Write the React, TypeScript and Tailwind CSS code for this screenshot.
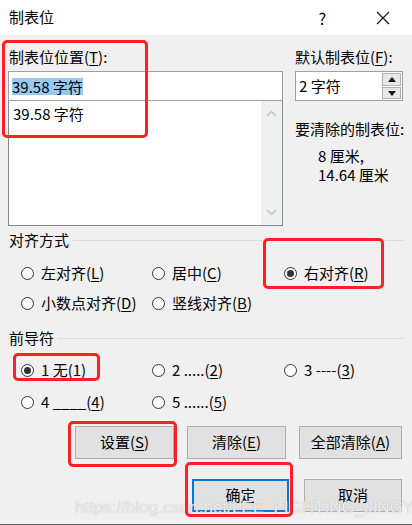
import React from "react";

const FONT = { fontFamily: '"Noto Sans CJK SC", "Noto Sans", sans-serif' };

function U({ children }: { children: React.ReactNode }) {
  return <span className="underline underline-offset-2">{children}</span>;
}

function Radio({ checked, children }: { checked?: boolean; children: React.ReactNode }) {
  return (
    <div className="flex items-center">
      <span className="flex h-[13px] w-[13px] items-center justify-center rounded-full border border-[#333] bg-white">
        {checked && <span className="h-[7px] w-[7px] rounded-full bg-[#333]" />}
      </span>
      <span className="ml-[7px] whitespace-nowrap">{children}</span>
    </div>
  );
}

function Btn({ w, focus, children }: { w: string; focus?: boolean; children: React.ReactNode }) {
  return (
    <div
      className={`flex h-[33px] items-center justify-center bg-[#e1e1e1] ${w} ${
        focus ? "border-2 border-[#0078d7]" : "border border-[#adadad]"
      }`}
    >
      {children}
    </div>
  );
}

function Section({ label, line }: { label: string; line: string }) {
  return (
    <div className="flex h-[20px] items-center pl-[9px] pr-[8px] leading-[20px]">
      <span>{label}</span>
      <div className={`h-px flex-1 bg-[#dcdcdc] ${line}`} />
    </div>
  );
}

export default function App() {
  return (
    <div
      className="relative flex h-[525px] w-[412px] flex-col overflow-hidden bg-[#f0f0f0] text-[15px] text-[#000]"
      style={FONT}
    >
      {/* title bar */}
      <div className="flex h-[35px] shrink-0 items-center bg-white pl-[9px]">
        <span className="flex-1">制表位</span>
        <span className="mr-[50px] text-[16px]">?</span>
        <svg width="14" height="14" viewBox="0 0 14 14" className="mr-[22px]">
          <path d="M1 1L13 13M13 1L1 13" stroke="#111" strokeWidth="1.1" />
        </svg>
      </div>

      {/* top area */}
      <div className="flex pt-[12px]">
        <div className="ml-[8px] w-[275px]">
          <div className="h-[20px] pl-[1px] leading-[20px]">
            制表位位置(<U>T</U>):
          </div>
          <div className="mt-[4px] flex h-[30px] items-center border border-[#a0a0a0] bg-white pl-[3px]">
            <span className="bg-[#99c9ef] leading-[17px]">39.58 字符</span>
          </div>
          <div className="flex h-[125px] border border-t-0 border-[#828790] bg-white">
            <div className="flex-1 pl-[4px] pt-[3px] leading-[20px]">39.58 字符</div>
            <div className="flex w-[21px] flex-col items-center justify-between bg-[#f0f0f0] py-[9px]">
              <svg width="11" height="7" viewBox="0 0 11 7">
                <path d="M1 6L5.5 1.5L10 6" fill="none" stroke="#c4c4c4" strokeWidth="1.5" />
              </svg>
              <svg width="11" height="7" viewBox="0 0 11 7">
                <path d="M1 1L5.5 5.5L10 1" fill="none" stroke="#c4c4c4" strokeWidth="1.5" />
              </svg>
            </div>
          </div>
        </div>

        <div className="ml-[12px] w-[108px]">
          <div className="h-[20px] leading-[20px]">
            默认制表位(<U>F</U>):
          </div>
          <div className="mt-[4px] flex h-[30px] items-center border border-[#a0a0a0] bg-white pl-[3px]">
            <span className="flex-1">2 字符</span>
            <div className="mr-[1px] flex flex-col gap-[1px]">
              <div className="flex h-[13px] w-[19px] items-center justify-center border border-[#b0b0b0] bg-[#e8e8e8]">
                <svg width="8" height="5" viewBox="0 0 8 5">
                  <path d="M0 5L4 0L8 5Z" fill="#111" />
                </svg>
              </div>
              <div className="flex h-[12px] w-[19px] items-center justify-center border border-[#b0b0b0] bg-[#e8e8e8]">
                <svg width="8" height="5" viewBox="0 0 8 5">
                  <path d="M0 0L4 5L8 0Z" fill="#111" />
                </svg>
              </div>
            </div>
          </div>
          <div className="mt-[18px] h-[20px] whitespace-nowrap leading-[20px]">要清除的制表位:</div>
          <div className="mt-[7px] pl-[23px] leading-[19px]">
            <div>8 厘米,</div>
            <div>14.64 厘米</div>
          </div>
        </div>
      </div>

      {/* alignment */}
      <div className="mt-[4px]">
        <Section label="对齐方式" line="ml-[4px]" />
      </div>
      <div className="mt-[8px] grid grid-cols-[131px_132px_1fr] pl-[21px]">
        <div className="flex h-[30px] items-center">
          <Radio>
            左对齐(<U>L</U>)
          </Radio>
        </div>
        <div className="flex h-[30px] items-center">
          <Radio>
            居中(<U>C</U>)
          </Radio>
        </div>
        <div className="flex h-[30px] items-center">
          <Radio checked>
            右对齐(<U>R</U>)
          </Radio>
        </div>
        <div className="flex h-[30px] items-center">
          <Radio>
            小数点对齐(<U>D</U>)
          </Radio>
        </div>
        <div className="flex h-[30px] items-center">
          <Radio>
            竖线对齐(<U>B</U>)
          </Radio>
        </div>
      </div>

      {/* leader */}
      <div className="mt-[10px]">
        <Section label="前导符" line="ml-[4px]" />
      </div>
      <div className="mt-[6px] grid grid-cols-[131px_132px_1fr] pl-[21px]">
        <div className="flex h-[32px] items-center">
          <Radio checked>
            1 无(<U>1</U>)
          </Radio>
        </div>
        <div className="flex h-[32px] items-center">
          <Radio>
            2 .....(<U>2</U>)
          </Radio>
        </div>
        <div className="flex h-[32px] items-center">
          <Radio>
            3 ----(<U>3</U>)
          </Radio>
        </div>
        <div className="flex h-[32px] items-center">
          <Radio>
            4 ____(<U>4</U>)
          </Radio>
        </div>
        <div className="flex h-[32px] items-center">
          <Radio>
            5 ......(<U>5</U>)
          </Radio>
        </div>
      </div>

      {/* buttons */}
      <div className="mt-[8px] flex justify-end gap-[13px] pr-[10px]">
        <Btn w="w-[99px]">
          设置(<U>S</U>)
        </Btn>
        <Btn w="w-[99px]">
          清除(<U>E</U>)
        </Btn>
        <Btn w="w-[103px]">
          全部清除(<U>A</U>)
        </Btn>
      </div>
      <div className="mt-[20px] flex justify-end gap-[15px] pr-[10px]">
        <Btn w="w-[97px]" focus>
          确定
        </Btn>
        <Btn w="w-[98px]">取消</Btn>
      </div>
      <div className="mt-auto h-px bg-[#666]" />

      {/* watermark */}
      <div
        className="pointer-events-none absolute left-[75px] top-[495px] whitespace-nowrap text-[17px] text-white/80"
        style={{ fontFamily: '"Liberation Sans", sans-serif', textShadow: "0 0 1px #9a9a9a" }}
      >
        https://blog.csdn.net/LEE_FIGHTING_JINGYU
      </div>

      {/* red annotation boxes */}
      <div className="pointer-events-none absolute left-[2px] top-[40px] h-[98px] w-[146px] rounded-[5px] border-[3px] border-[#ff2020]" />
      <div className="pointer-events-none absolute left-[263px] top-[238px] h-[51px] w-[121px] rounded-[5px] border-[3px] border-[#ff2020]" />
      <div className="pointer-events-none absolute left-[13px] top-[353px] h-[28px] w-[87px] rounded-[5px] border-[3px] border-[#ff2020]" />
      <div className="pointer-events-none absolute left-[68px] top-[421px] h-[46px] w-[109px] rounded-[5px] border-[3px] border-[#ff2020]" />
      <div className="pointer-events-none absolute left-[185px] top-[462px] h-[55px] w-[108px] rounded-[5px] border-[3px] border-[#ff2020]" />
    </div>
  );
}
